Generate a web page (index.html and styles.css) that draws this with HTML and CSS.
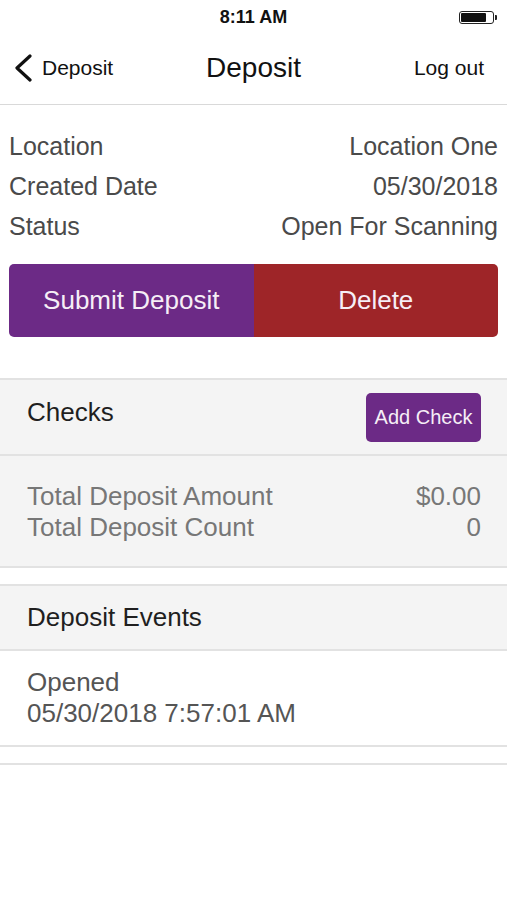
FILE: index.html
```html
<!DOCTYPE html>
<html>
<head>
  <title>Deposit</title>
  <link rel="stylesheet" href="styles.css">
</head>
<body>
  <div class="status-bar">
    <span></span>
    <span class="time">8:11 AM</span>
    <span class="battery"><span class="battery-level"></span></span>
  </div>

  <div class="nav">
    <a class="nav-back">
      <svg width="20" height="28" viewBox="0 0 20 28"><path d="M17 2 L4 14 L17 26" fill="none" stroke="#111" stroke-width="3.2" stroke-linecap="round" stroke-linejoin="round"/></svg>
      <span>Deposit</span>
    </a>
    <span class="nav-title">Deposit</span>
    <a class="nav-right">Log out</a>
  </div>

  <div class="info">
    <div class="info-row"><span>Location</span><span>Location One</span></div>
    <div class="info-row"><span>Created Date</span><span>05/30/2018</span></div>
    <div class="info-row"><span>Status</span><span>Open For Scanning</span></div>
  </div>

  <div class="actions">
    <button class="btn-submit">Submit Deposit</button>
    <button class="btn-delete">Delete</button>
  </div>

  <div class="section section-gray">
    <div class="section-header">
      <span class="section-title">Checks</span>
      <button class="btn-add">Add Check</button>
    </div>
    <div class="totals">
      <div class="total-row"><span>Total Deposit Amount</span><span>$0.00</span></div>
      <div class="total-row"><span>Total Deposit Count</span><span>0</span></div>
    </div>
  </div>

  <div class="section">
    <div class="section-header events-header">
      <span class="section-title">Deposit Events</span>
    </div>
    <div class="events">
      <div>Opened</div>
      <div>05/30/2018 7:57:01 AM</div>
    </div>
  </div>

  <div class="section section-empty"></div>
</body>
</html>
```

FILE: styles.css
```css
body {
  margin: 0;
  width: 507px;
  font-family: 'Liberation Sans', Arial, sans-serif;
  background-color: #ffffff;
  color: #222;
}

/* Status bar */
.status-bar {
  display: grid;
  grid-template-columns: 1fr auto 1fr;
  align-items: center;
  height: 35px;
}
.time {
  font-size: 18px;
  font-weight: bold;
  color: #111;
}
.battery {
  justify-self: end;
  margin-right: 13px;
  width: 31px;
  height: 9px;
  border: 1.5px solid #222;
  border-radius: 3px;
  padding: 1px;
  position: relative;
}
.battery:after {
  content: "";
  position: absolute;
  right: -4px;
  top: 3px;
  width: 2px;
  height: 5px;
  background-color: #222;
  border-radius: 0 1px 1px 0;
}
.battery-level {
  display: block;
  width: 25px;
  height: 100%;
  background-color: #111;
  border-radius: 1px;
}

/* Nav bar */
.nav {
  display: grid;
  grid-template-columns: 1fr auto 1fr;
  align-items: center;
  height: 65px;
  padding-bottom: 4px;
  border-bottom: 1px solid #d9d9d9;
}
.nav-back {
  display: flex;
  align-items: center;
  gap: 9px;
  padding-left: 13px;
  font-size: 21px;
  color: #111;
}
.nav-title {
  font-size: 28px;
  color: #111;
}
.nav-right {
  justify-self: end;
  padding-right: 23px;
  font-size: 21px;
  color: #111;
}

/* Deposit info */
.info {
  padding: 21px 9px 0;
}
.info-row {
  display: flex;
  justify-content: space-between;
  font-size: 25px;
  line-height: 40px;
  color: #4a4a4a;
}

.actions {
  display: flex;
  margin: 18px 9px 0;
  height: 73px;
  border-radius: 5px;
  overflow: hidden;
}
.actions button {
  flex: 1;
  border: none;
  font-family: inherit;
  font-size: 26px;
  color: #f6eef6;
}
.btn-submit { background-color: #6c2a86; }
.btn-delete { background-color: #9e2528; }

/* Sections */
.section {
  margin-top: 16px;
  border-top: 2px solid #e2e2e2;
  border-bottom: 2px solid #e2e2e2;
}
.section-gray {
  margin-top: 41px;
  background-color: #f4f4f4;
}
.section-header {
  display: flex;
  justify-content: space-between;
  align-items: center;
  height: 74px;
  padding: 0 26px 0 27px;
  border-bottom: 2px solid #e2e2e2;
}
.section-title {
  font-size: 26px;
  color: #1f1f1f;
  margin-bottom: 10px;
}
.btn-add {
  height: 49px;
  width: 115px;
  border: none;
  border-radius: 5px;
  background-color: #6c2a86;
  color: #f6eef6;
  font-family: inherit;
  font-size: 20px;
}

.totals {
  padding: 25px 26px 23px 27px;
}
.total-row {
  display: flex;
  justify-content: space-between;
  font-size: 26px;
  line-height: 31px;
  color: #777;
}

.events-header {
  height: 63px;
  background-color: #f4f4f4;
}
.events-header .section-title {
  margin-bottom: 0;
}
.events {
  padding: 16px 27px 16px;
  font-size: 26px;
  line-height: 31px;
  color: #555;
}

.section-empty {
  border-bottom: none;
}
```
